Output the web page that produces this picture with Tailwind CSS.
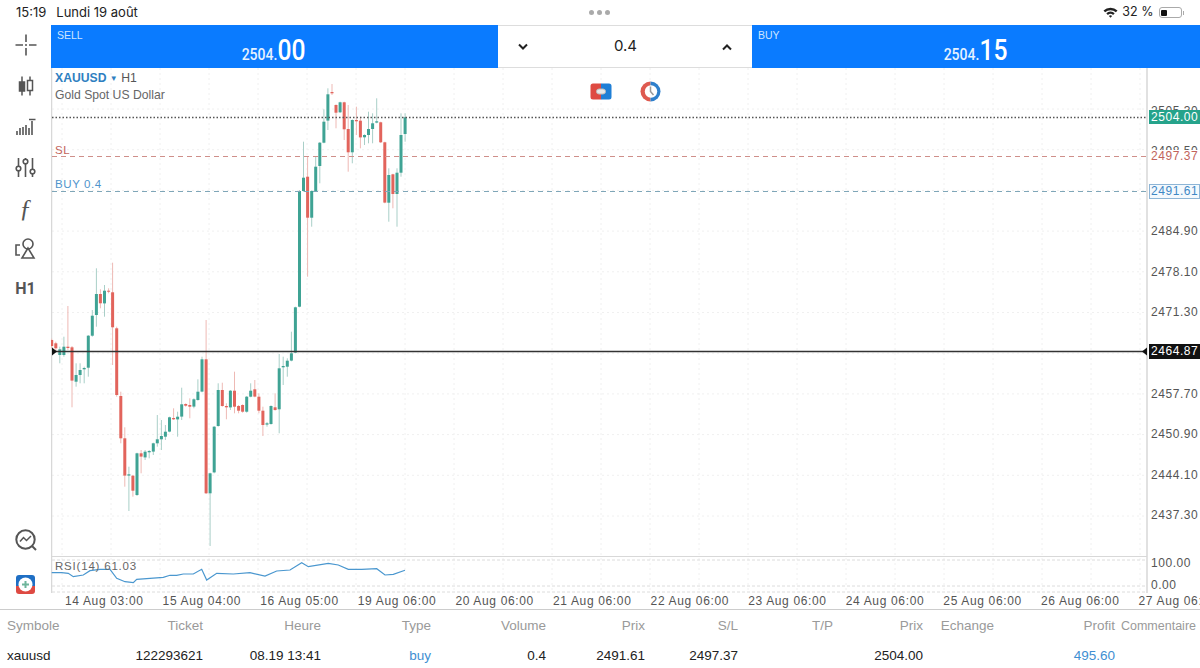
<!DOCTYPE html>
<html>
  <head>
    <title>XAUUSD</title>
    <script src="https://cdn.jsdelivr.net/npm/@tailwindcss/browser@4"></script>
  </head>
  <body>
    <div class="w-[1200px] h-[668px] overflow-hidden bg-white flex flex-col font-['Liberation_Sans',sans-serif] text-[#222]">
      <!-- status bar -->
      <div class="h-[25px] shrink-0 relative flex items-center pl-4 pr-[16px] text-[13px] font-['Inter',sans-serif] text-[#222]">
        <span>15:19</span>
        <span class="ml-[10px]">Lundi 19 août</span>
        <div class="absolute left-[589px] top-[10px] flex gap-[3px]">
          <div class="w-[5px] h-[5px] rounded-full bg-[#aaa]"></div>
          <div class="w-[5px] h-[5px] rounded-full bg-[#aaa]"></div>
          <div class="w-[5px] h-[5px] rounded-full bg-[#aaa]"></div>
        </div>
        <div class="ml-auto flex items-center">
          <svg width="15" height="11" viewBox="0 0 15 11" class="mr-[4px]">
            <path d="M0.5 3.6 A10 10 0 0 1 14.5 3.6 L12.9 5.3 A7.8 7.8 0 0 0 2.1 5.3Z" fill="#222"/>
            <path d="M3.3 6.3 A6 6 0 0 1 11.7 6.3 L10.1 8 A3.8 3.8 0 0 0 4.9 8Z" fill="#222"/>
            <path d="M5.9 9 A2.2 2.2 0 0 1 9.1 9 L7.5 10.8Z" fill="#222"/>
          </svg>
          <span class="text-[12.5px]">32 %</span>
          <div class="ml-[5px] w-[23px] h-[11px] rounded-[3px] border border-[#aaa] p-[1.5px]">
            <div class="w-[6px] h-full rounded-[1px] bg-[#111]"></div>
          </div>
          <div class="w-[1.5px] h-[4px] bg-[#aaa] ml-[1px]"></div>
        </div>
      </div>

      <div class="flex h-[584px] shrink-0">
        <!-- left toolbar -->
        <div class="w-[51px] shrink-0 flex flex-col items-center pb-[15px] text-[#555]">
          <div class="h-[40.7px] w-full flex items-center justify-center">
            <svg width="22" height="22" viewBox="0 0 22 22" stroke="#555" stroke-width="1.6" fill="none"><path d="M0.5 11H8M14 11H21.5M11 0.5V8M11 14V21.5M10 11h2"/></svg>
          </div>
          <div class="h-[40.7px] w-full flex items-center justify-center">
            <svg width="18" height="20" viewBox="0 0 18 20" stroke="#555" stroke-width="1.5" fill="none"><path d="M5 0.5V19.5M13 0.5V19.5"/><rect x="2.5" y="6" width="5" height="9" fill="#555"/><rect x="10.5" y="4.5" width="5" height="10" fill="#fff"/></svg>
          </div>
          <div class="h-[40.7px] w-full flex items-center justify-center">
            <svg width="20" height="18" viewBox="0 0 20 18" stroke="#555" stroke-width="1.6" fill="none"><path d="M1 17v-4M4 17v-7M7 17V9M10 17V7M13 17V10M16 17V3M13 1.5h6.5"/></svg>
          </div>
          <div class="h-[40.7px] w-full flex items-center justify-center">
            <svg width="21" height="21" viewBox="0 0 21 21" stroke="#555" stroke-width="1.6" fill="none"><path d="M3.5 1V9M3.5 14V20M10.5 1V2M10.5 7V20M17.5 1V12M17.5 17V20"/><circle cx="3.5" cy="11.5" r="2.3"/><circle cx="10.5" cy="4.5" r="2.3"/><circle cx="17.5" cy="14.5" r="2.3"/></svg>
          </div>
          <div class="h-[40.7px] w-full flex items-center justify-center">
            <span class="font-['Liberation_Serif',serif] italic text-[25px] leading-none text-[#555]">ƒ</span>
          </div>
          <div class="h-[40.7px] w-full flex items-center justify-center">
            <svg width="21" height="21" viewBox="0 0 21 21" stroke="#555" stroke-width="1.6" fill="none"><path d="M5 7H1V17H5"/><circle cx="13" cy="6" r="5"/><path d="M13 10L7 20H19Z"/></svg>
          </div>
          <div class="h-[40.7px] w-full flex items-center justify-center font-['Roboto',sans-serif] font-bold text-[16px] text-[#555]">H1</div>
          <div class="mt-auto mb-[24px]">
            <svg width="22" height="22" viewBox="0 0 22 22" stroke="#555" stroke-width="2" fill="none"><circle cx="10.5" cy="10.5" r="9.2"/><path d="M5 12.5L8.5 8.5L11.5 11.5L16 7" stroke-width="1.5"/><path d="M17 17L21 21"/></svg>
          </div>
          <svg width="19" height="19" viewBox="0 0 19 19">
            <path d="M3 0H16A3 3 0 0 1 19 3V11H0V3A3 3 0 0 1 3 0Z" fill="#1f6fc4"/>
            <path d="M0 11H19V16A3 3 0 0 1 16 19H3A3 3 0 0 1 0 16Z" fill="#de4a42"/>
            <circle cx="9.5" cy="9.5" r="7" fill="#fff"/>
            <path d="M9.5 6V13M6 9.5H13" stroke="#6fb59b" stroke-width="2"/>
          </svg>
        </div>

        <div class="flex-1 min-w-0 flex flex-col">
          <!-- trade bar -->
          <div class="h-[43px] shrink-0 flex">
            <div class="w-[447px] bg-[#0a7bff] relative flex items-center justify-center text-white pt-[7px] font-['Roboto',sans-serif]">
              <span class="absolute left-[6px] top-[3px] text-[10.5px] text-[#cfe5ff] font-['Liberation_Sans',sans-serif]">SELL</span>
              <div class="flex items-end scale-x-[0.85] -ml-[1px]">
                <span class="text-[16.5px] font-medium mb-[1px] text-[#e6f2ff] leading-none">2504.</span><span class="text-[29px] font-medium leading-none">00</span>
              </div>
            </div>
            <div class="w-[254px] border-y border-[#ddd] flex items-center justify-between px-[20px]">
              <svg width="10" height="8" viewBox="0 0 10 8" fill="none" stroke="#222" stroke-width="2"><path d="M1 1.5L5 5.5L9 1.5"/></svg>
              <span class="text-[15px] text-[#222] font-['Inter',sans-serif] ml-[1px]">0.4</span>
              <svg width="10" height="8" viewBox="0 0 10 8" fill="none" stroke="#222" stroke-width="2"><path d="M1 6.5L5 2.5L9 6.5"/></svg>
            </div>
            <div class="flex-1 bg-[#0a7bff] relative flex items-center justify-center text-white pt-[7px] font-['Roboto',sans-serif]">
              <span class="absolute left-[6px] top-[3px] text-[10.5px] text-[#cfe5ff] font-['Liberation_Sans',sans-serif]">BUY</span>
              <div class="flex items-end scale-x-[0.85] -ml-[1px]">
                <span class="text-[16.5px] font-medium mb-[1px] text-[#e6f2ff] leading-none">2504.</span><span class="text-[29px] font-medium leading-none">15</span>
              </div>
            </div>
          </div>

          <!-- chart -->
          <div class="h-[525px] shrink-0 relative">
            <svg id="chart" width="1149" height="525" viewBox="51 68 1149 525" class="absolute inset-0"></svg>

            <div class="absolute left-[4px] top-[2px] text-[12.2px] leading-[16px]">
              <div class="text-[#2f7fc1]"><b class="font-bold">XAUUSD</b> <span class="text-[8px] align-[1px]">▼</span> <span class="text-[#555]">H1</span></div>
              <div class="text-[#666]">Gold Spot US Dollar</div>
            </div>
            <div class="absolute left-[4px] top-[74px] text-[11.5px] tracking-[0.6px] text-[#c2635c]">SL</div>
            <div class="absolute left-[4px] top-[108px] text-[11.5px] tracking-[0.6px] text-[#4f94cc]">BUY 0.4</div>
            <div class="absolute left-[4px] top-[490px] text-[11.5px] tracking-[0.8px] text-[#666]">RSI(14) 61.03</div>

            <!-- order icons -->
            <svg width="22" height="17" viewBox="0 0 22 17" class="absolute left-[539px] top-[15px]">
              <path d="M11 0.5H3A2.5 2.5 0 0 0 0.5 3V14A2.5 2.5 0 0 0 3 16.5H11Z" fill="#de4a42"/>
              <path d="M11 0.5H19A2.5 2.5 0 0 1 21.5 3V14A2.5 2.5 0 0 1 19 16.5H11Z" fill="#1f7fd6"/>
              <rect x="6.5" y="6" width="9" height="5" rx="2.5" fill="#e8e8e8" stroke="#bbb"/>
            </svg>
            <svg width="21" height="21" viewBox="0 0 21 21" class="absolute left-[589px] top-[13px]">
              <path d="M10.5 0.5A10 10 0 0 0 10.5 20.5Z" fill="#de5a50"/>
              <path d="M10.5 0.5A10 10 0 0 1 10.5 20.5Z" fill="#2f80cc"/>
              <circle cx="11" cy="10.5" r="6.2" fill="#fff"/>
              <path d="M10.5 5.5V10.5L13.5 14" stroke="#999" stroke-width="1.5" fill="none"/>
            </svg>

            <!-- price axis -->
            <div class="absolute left-[1098px] top-0 w-[51px] h-full text-[12px] tracking-[0.55px] text-[#555] leading-[14px] whitespace-nowrap">
              <span class="absolute left-[2px] top-[36px]">2505.30</span>
              <span class="absolute left-[2px] top-[76px]">2498.50</span>
              <span class="absolute left-[2px] top-[156px]">2484.90</span>
              <span class="absolute left-[2px] top-[197px]">2478.10</span>
              <span class="absolute left-[2px] top-[237px]">2471.30</span>
              <span class="absolute left-[2px] top-[319px]">2457.70</span>
              <span class="absolute left-[2px] top-[359px]">2450.90</span>
              <span class="absolute left-[2px] top-[400px]">2444.10</span>
              <span class="absolute left-[2px] top-[440px]">2437.30</span>
              <span class="absolute left-[2px] top-[488px]">100.00</span>
              <span class="absolute left-[2px] top-[510px]">0.00</span>
              <span class="absolute left-0 top-[42px] h-[14px] w-[51px] pl-[2px] bg-[#26a38b] text-white">2504.00</span>
              <span class="absolute left-0 top-[82px] h-[13px] w-[51px] pl-[2px] bg-white text-[#c2635c] leading-[13px]">2497.37</span>
              <span class="absolute left-0 top-[116px] h-[15px] w-[51px] pl-[1px] bg-[#f4f9fd] border border-[#8db5d6] text-[#3f88c5] leading-[13px]">2491.61</span>
              <span class="absolute left-0 top-[276px] h-[15px] w-[51px] pl-[2px] bg-[#111] text-white">2464.87</span>
            </div>
          </div>

          <!-- time axis -->
          <div class="h-[16px] shrink-0 relative text-[12px] tracking-[0.65px] text-[#555] leading-[16px] whitespace-nowrap overflow-hidden">
            <div class="flex pl-[14px] gap-x-[21px]">
              <span class="w-[76.6px] shrink-0">14 Aug 03:00</span>
              <span class="w-[76.6px] shrink-0">15 Aug 04:00</span>
              <span class="w-[76.6px] shrink-0">16 Aug 05:00</span>
              <span class="w-[76.6px] shrink-0">19 Aug 06:00</span>
              <span class="w-[76.6px] shrink-0">20 Aug 06:00</span>
              <span class="w-[76.6px] shrink-0">21 Aug 06:00</span>
              <span class="w-[76.6px] shrink-0">22 Aug 06:00</span>
              <span class="w-[76.6px] shrink-0">23 Aug 06:00</span>
              <span class="w-[76.6px] shrink-0">24 Aug 06:00</span>
              <span class="w-[76.6px] shrink-0">25 Aug 06:00</span>
              <span class="w-[76.6px] shrink-0">26 Aug 06:00</span>
              <span class="w-[76.6px] shrink-0">27 Aug 06:00</span>
            </div>
          </div>
        </div>
      </div>

      <!-- positions table -->
      <div class="flex-1 border-t border-[#ccc] text-[13.5px]">
        <div class="grid grid-cols-[100px_103px_118px_110px_115px_99px_93px_95px_90px_71px_121px_81px] h-[30px] mt-[1px] items-center text-right text-[#9a9a9a]">
          <span class="text-left pl-[7px]">Symbole</span>
          <span>Ticket</span>
          <span>Heure</span>
          <span>Type</span>
          <span>Volume</span>
          <span>Prix</span>
          <span>S/L</span>
          <span>T/P</span>
          <span>Prix</span>
          <span>Echange</span>
          <span>Profit</span>
          <span class="text-[12.5px]">Commentaire</span>
        </div>
        <div class="grid grid-cols-[100px_103px_118px_110px_115px_99px_93px_95px_90px_71px_121px_81px] h-[30px] items-center text-right text-[#222]">
          <span class="text-left pl-[7px]">xauusd</span>
          <span>122293621</span>
          <span>08.19 13:41</span>
          <span class="text-[#3f8fd2]">buy</span>
          <span>0.4</span>
          <span>2491.61</span>
          <span>2497.37</span>
          <span></span>
          <span>2504.00</span>
          <span></span>
          <span class="text-[#3f8fd2]">495.60</span>
          <span></span>
        </div>
      </div>
    </div>

    <script>
      // [top, bottom, wickHigh, wickLow, up] read from the chart, in px
      const toY1 = (v) => 220 + v / 3;
      const toY2 = (v) => 80 + v / 3;
      const first = [
        [360,378,356,385,0],[370,385,365,392,0],[388,405,380,430,1],[380,405,350,410,1],[380,384,258,390,0],
        [382,482,378,562,0],[465,485,430,500,1],[450,465,430,490,1],[444,448,440,490,1],[347,443,345,470,1],
        [287,347,270,350,1],[222,285,145,320,1],[222,250,208,265,0],[212,250,195,290,1],[212,215,205,220,0],
        [217,322,128,435,0],[325,525,320,530,0],[528,655,515,670,0],[655,767,622,800,0],[763,767,740,873,1],
        [767,812,765,830,0],[700,825,698,828,1],[700,710,690,760,0],[695,712,690,720,1],[693,697,690,715,1],
        [670,695,668,705,1],[658,670,585,680,1],[648,658,600,690,1],[635,650,615,660,1],[592,635,590,637,1],
        [594,598,565,600,0],[590,598,575,650,1],[553,590,503,600,1],[552,557,550,560,0],[555,560,535,595,0],
        [538,560,535,565,1],[515,540,478,542,1],[418,515,410,517,1],[418,820,300,822,0],[760,820,758,978,1],
        [620,757,618,760,1],[510,618,490,620,1],[510,558,488,560,0],[558,562,550,598,0],[512,562,510,570,1],
        [512,560,455,580,0],[558,572,555,580,0],[555,575,553,578,0],[530,575,528,578,1],[512,530,490,532,1],
        [508,530,480,532,0],[530,572,520,580,0],[572,615,560,648,0],[610,614,606,620,1],[558,612,556,614,1],
        [562,570,520,572,0],[445,568,402,640,1],[438,442,410,495,1],[422,440,415,470,1],[400,422,335,424,1],
        [262,398,260,400,1],
      ].map((c) => [toY1(c[0]), toY1(c[1]), toY1(c[2]), toY1(c[3]), c[4]]);
      const second = [
        [333,680,330,682,1],[293,333,185,335,1],[290,413,230,590,0],[333,413,331,440,1],[260,333,228,335,1],
        [188,258,186,310,1],[125,188,88,190,1],[43,122,25,150,1],[36,40,12,45,0],[75,98,73,145,0],
        [67,97,65,99,1],[67,148,65,180,0],[147,217,75,275,0],[120,217,118,250,1],[120,124,80,165,0],
        [122,172,110,205,0],[165,172,163,195,1],[147,165,95,190,1],[130,147,100,190,1],[124,128,55,130,1],
        [127,187,125,189,0],[187,368,185,370,0],[285,368,265,425,1],[283,342,281,385,0],[278,342,265,440,1],
        [165,278,100,290,1],[112,162,100,185,1],
      ].map((c) => [toY2(c[0]), toY2(c[1]), toY2(c[2]), toY2(c[3]), c[4]]);
      const candles = first.concat(second);

      const rsi = [
        [155,188],[185,188],[205,190],[220,200],[250,195],[270,182],[300,178],[330,178],[350,205],[375,215],
        [400,218],[410,208],[450,205],[490,202],[510,196],[530,196],[550,192],[580,192],[605,178],[620,210],
        [650,190],[700,192],[750,188],[795,198],[830,183],[870,180],[905,158],[925,170],[985,160],[1015,165],
        [1045,178],[1085,178],[1130,176],[1155,195],[1180,193],[1215,181],
      ].map((p) => (p[0] / 3).toFixed(1) + "," + (510 + p[1] / 3).toFixed(1)).join(" ");

      let out = "";
      // faint grid
      for (let x = 62; x < 1147; x += 49) {
        out += `<path d="M${x} 68V556M${x} 558V590" stroke="#f0f0f0" stroke-dasharray="2 3"/>`;
      }
      for (let y = 109; y < 556; y += 40.7) {
        out += `<path d="M52 ${y}H1146" stroke="#f0f0f0" stroke-dasharray="2 3"/>`;
      }
      // frame and indicator panel
      out += `<path d="M51.5 68V593M1147 68V593" stroke="#d8d8d8" stroke-width="1.5"/>`;
      out += `<path d="M52 556.5H1147" stroke="#d8d8d8"/>`;
      out += `<path d="M52 560H1147M52 586H1147M52 592H1147" stroke="#dcdcdc" stroke-dasharray="3 2"/>`;

      candles.forEach((c, i) => {
        const x = 51.7 + i * 4.062;
        const col = c[4] ? "#3fa394" : "#e2645c";
        const wick = c[4] ? "#a9cfc8" : "#eeb9b4";
        out += `<path d="M${x.toFixed(1)} ${c[2].toFixed(1)}V${c[3].toFixed(1)}" stroke="${wick}" stroke-width="1"/>`;
        out += `<rect x="${(x - 1.5).toFixed(1)}" y="${c[0].toFixed(1)}" width="3" height="${Math.max(c[1] - c[0], 1).toFixed(1)}" fill="${col}"/>`;
      });

      // price lines
      out += `<path d="M52 117.5H1147" stroke="#555" stroke-width="1.5" stroke-dasharray="1.5 2"/>`;
      out += `<path d="M52 156.5H1147" stroke="#cf8f8a" stroke-dasharray="5 4"/>`;
      out += `<path d="M52 191.5H1147" stroke="#7fa6b8" stroke-dasharray="5 4"/>`;
      out += `<path d="M52 351.5H1147" stroke="#333" stroke-width="1.5"/>`;
      out += `<path d="M52 347.5L57 351.5L52 355.5Z" fill="#111"/>`;
      out += `<path d="M1147 347.5L1142 351.5L1147 355.5Z" fill="#111"/>`;
      out += `<polyline points="${rsi}" fill="none" stroke="#4a97cf" stroke-width="1.2"/>`;

      document.getElementById("chart").innerHTML = out;
    </script>
  </body>
</html>
